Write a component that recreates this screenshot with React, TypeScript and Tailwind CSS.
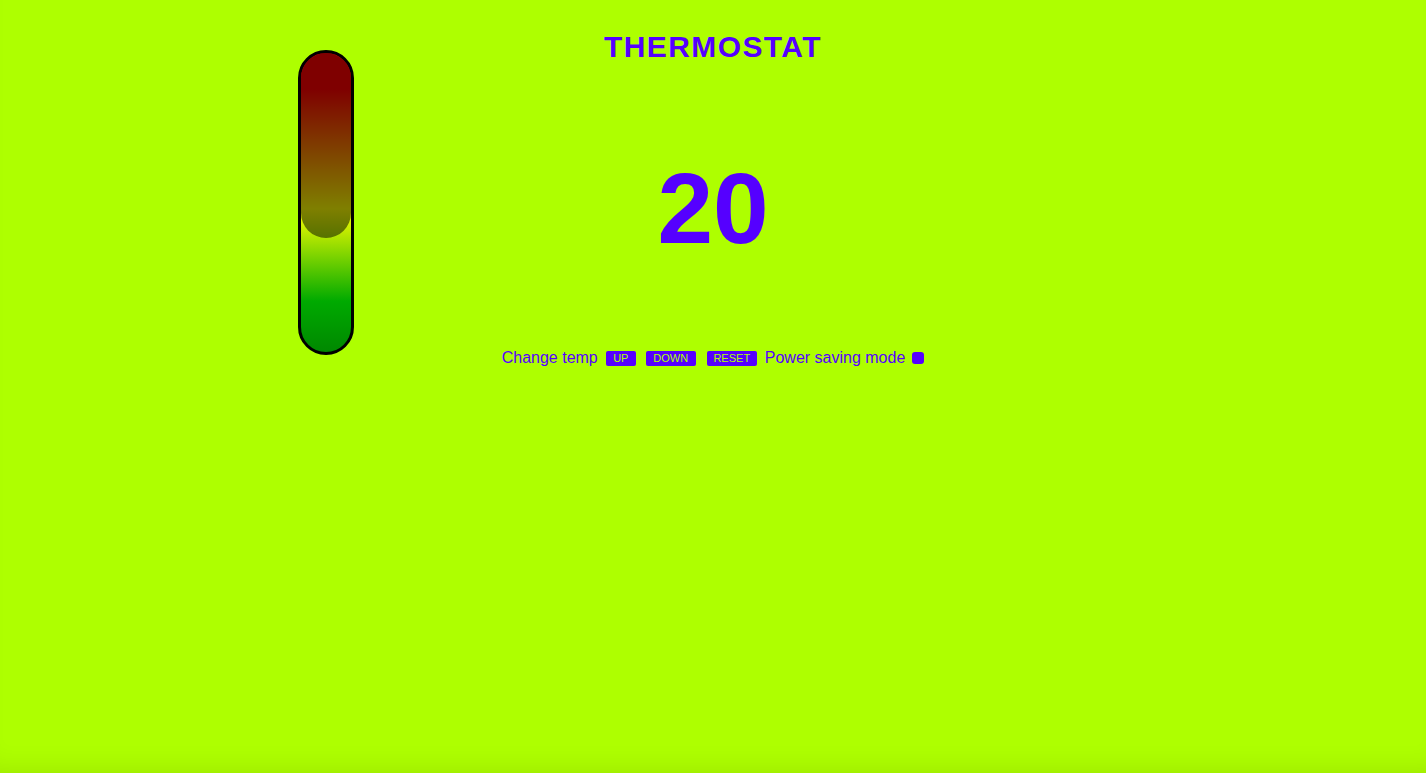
import { useState } from "react";

const PURPLE = "text-[#5500ff]";

function Thermometer({ temp }: { temp: number }) {
  // dark overlay covers the part above the current temperature
  const overlay = Math.round(185 - (temp - 20) * 6);
  return (
    <div className="mt-[50px] ml-[298px] w-[56px] h-[305px] rounded-full border-[3px] border-black overflow-hidden bg-[linear-gradient(to_bottom,#ff0000_0%,#ff0000_12%,#ffff00_52%,#00aa00_83%,#008800_100%)]">
      <div
        className="w-full rounded-b-full bg-black/50"
        style={{ height: overlay }}
      />
    </div>
  );
}

export default function App() {
  const [temp, setTemp] = useState(20);
  const [saving, setSaving] = useState(false);

  return (
    <div className="min-h-screen w-full bg-[#aeff00] font-['Liberation_Sans',Arial,sans-serif] shadow-[inset_0_-24px_30px_-24px_rgba(0,0,0,0.12)]">
      <div className="grid grid-cols-[1fr_auto_1fr]">
        <div>
          <Thermometer temp={temp} />
        </div>
        <div className="flex flex-col items-center">
          <h1 className={`pt-[32px] text-[30px] leading-[30px] font-bold tracking-[1.4px] ${PURPLE}`}>
            THERMOSTAT
          </h1>
          <div className={`mt-[96px] text-[100px] leading-[100px] font-bold ${PURPLE}`}>
            {temp}
          </div>
          <div className={`mt-[91px] flex items-center text-[16px] leading-[18px] ${PURPLE}`}>
            <span>Change temp</span>
            <button
              onClick={() => setTemp(temp + 1)}
              className="ml-[8px] w-[30px] h-[15px] rounded-[2px] bg-[#5500ff] text-[#aeff00] text-[11px] leading-[15px]"
            >
              UP
            </button>
            <button
              onClick={() => setTemp(temp - 1)}
              className="ml-[10px] w-[50px] h-[15px] rounded-[2px] bg-[#5500ff] text-[#aeff00] text-[11px] leading-[15px]"
            >
              DOWN
            </button>
            <button
              onClick={() => setTemp(20)}
              className="ml-[11px] w-[50px] h-[15px] rounded-[2px] bg-[#5500ff] text-[#aeff00] text-[11px] leading-[15px]"
            >
              RESET
            </button>
            <span className="ml-[8px]">Power saving mode</span>
            <button
              onClick={() => setSaving(!saving)}
              className="ml-[7px] w-[12px] h-[12px] rounded-[3px] bg-[#5500ff]"
            />
          </div>
        </div>
        <div />
      </div>
    </div>
  );
}
